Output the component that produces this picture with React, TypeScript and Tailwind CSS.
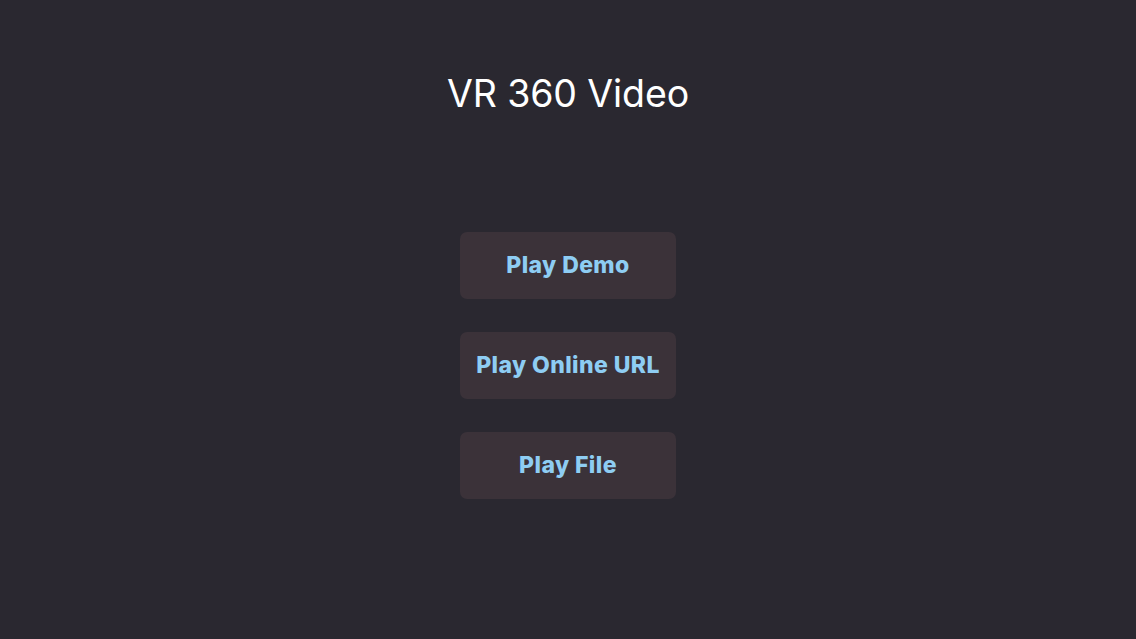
export default function App() {
  const buttons = ['Play Demo', 'Play Online URL', 'Play File'];

  return (
    <div
      className="w-full h-[639px] bg-[#2a2830] flex flex-col items-center"
      style={{ fontFamily: 'Inter, "Noto Sans", sans-serif' }}
    >
      <h1 className="mt-[70px] h-[48px] leading-[48px] text-[37.5px] font-normal text-white tracking-[-0.1px]">
        VR 360 Video
      </h1>

      <div className="mt-[114px] flex flex-col gap-[33px]">
        {buttons.map(label => (
          <button
            key={label}
            className="w-[216px] h-[67px] rounded-[7px] bg-[#3b3239] text-[#8ecdf3] text-[23px] font-extrabold tracking-[0.4px]"
          >
            {label}
          </button>
        ))}
      </div>
    </div>
  );
}
